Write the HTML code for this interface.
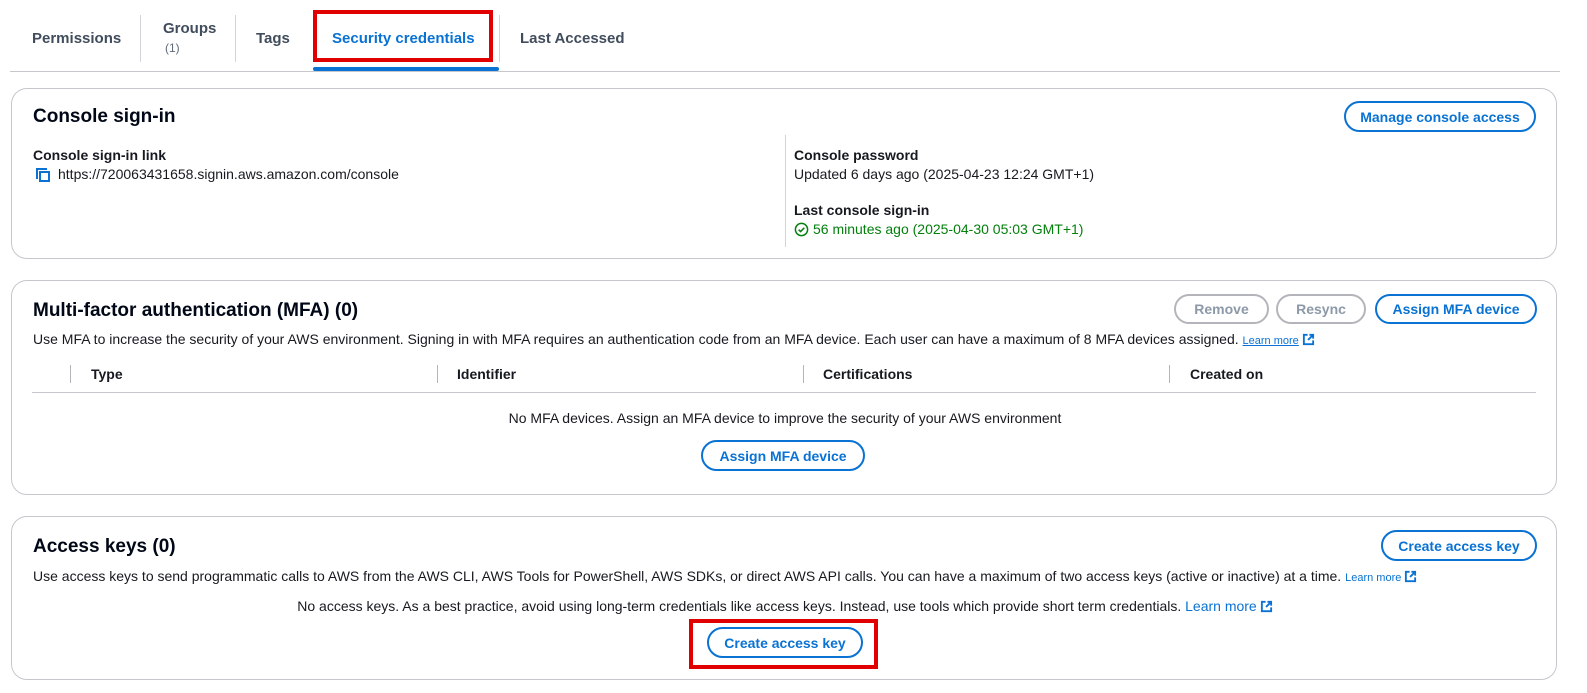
<!DOCTYPE html>
<html><head><style>
*{box-sizing:border-box;margin:0;padding:0}
html{overflow:hidden}
body{width:1587px;height:693px;background:#fff;font-family:"Liberation Sans",sans-serif;color:#16191f;position:relative;overflow:hidden;font-size:14px}
.a{position:absolute;white-space:nowrap}
.b{font-weight:bold}
.tab{position:absolute;font-weight:bold;font-size:15px;color:#414d5c}
.sep{position:absolute;width:1px;background:#d1d5db}
.card{position:absolute;left:11px;width:1546px;border:1px solid #c6c6cd;border-radius:16px}
.h{position:absolute;left:21px;font-size:19px;font-weight:bold;color:#000716}
.btn{position:absolute;border:2px solid #0972d3;border-radius:20px;color:#0972d3;font-weight:bold;font-size:14px;display:flex;align-items:center;justify-content:center;background:#fff}
.dis{border-color:#b4b4bb;color:#8d99a8}
.lnk{color:#0972d3}
.red{position:absolute;border:4px solid #e00000}
.th{position:absolute;font-weight:bold;top:366px}
.ext{display:inline-block;vertical-align:-2px;margin-left:3px}
</style></head><body>
<div class="tab" style="left:32px;top:30px">Permissions</div>
<div class="sep" style="left:140px;top:15px;height:47px"></div>
<div class="tab" style="left:163px;top:20px">Groups</div>
<div class="a" style="left:165px;top:41px;font-size:12px;color:#5f6b7a">(1)</div>
<div class="sep" style="left:235px;top:15px;height:47px"></div>
<div class="tab" style="left:256px;top:30px">Tags</div>
<div class="tab" style="left:332px;top:30px;color:#0972d3">Security credentials</div>
<div class="sep" style="left:499px;top:15px;height:47px"></div>
<div class="tab" style="left:520px;top:30px">Last Accessed</div>
<div class="red" style="left:313px;top:10px;width:180px;height:52px"></div>
<div class="a" style="left:10px;top:71px;width:1550px;height:1px;background:#c6c6cd"></div>
<div class="a" style="left:313px;top:67px;width:186px;height:4px;background:#0972d3;border-radius:2px"></div>

<div class="card" style="top:88px;height:171px">
 <div class="h" style="top:17px">Console sign-in</div>
 <div class="btn" style="left:1332px;top:12px;width:192px;height:31px">Manage console access</div>
 <div class="a b" style="left:21px;top:58px">Console sign-in link</div>
 <svg class="a" style="left:23px;top:78px" width="16" height="16" viewBox="0 0 16 16"><path d="M2 12V2h10" fill="none" stroke="#0972d3" stroke-width="2"/><rect x="5" y="5" width="9" height="9" fill="none" stroke="#0972d3" stroke-width="2"/></svg>
 <div class="a" style="left:46px;top:77px">https://720063431658.signin.aws.amazon.com/console</div>
 <div class="sep" style="left:773px;top:46px;height:112px"></div>
 <div class="a b" style="left:782px;top:58px">Console password</div>
 <div class="a" style="left:782px;top:77px">Updated 6 days ago (2025-04-23 12:24 GMT+1)</div>
 <div class="a b" style="left:782px;top:113px">Last console sign-in</div>
 <svg class="a" style="left:782px;top:133px" width="15" height="15" viewBox="0 0 16 16"><circle cx="8" cy="8" r="6.5" fill="none" stroke="#037f0c" stroke-width="1.6"/><path d="M5 8.2l2 2 4-4" fill="none" stroke="#037f0c" stroke-width="1.6"/></svg>
 <div class="a" style="left:801px;top:132px;color:#037f0c">56 minutes ago (2025-04-30 05:03 GMT+1)</div>
</div>

<div class="card" style="top:280px;height:215px">
 <div class="h" style="top:19px">Multi-factor authentication (MFA) (0)</div>
 <div class="btn dis" style="left:1162px;top:13px;width:95px;height:30px">Remove</div>
 <div class="btn dis" style="left:1264px;top:13px;width:90px;height:30px">Resync</div>
 <div class="btn" style="left:1363px;top:13px;width:162px;height:30px">Assign MFA device</div>
 <div class="a" style="left:21px;top:50px">Use MFA to increase the security of your AWS environment. Signing in with MFA requires an authentication code from an MFA device. Each user can have a maximum of 8 MFA devices assigned. <span class="lnk" style="font-size:11px;text-decoration:underline">Learn more</span><svg class="ext" width="13" height="13" viewBox="0 0 14 14"><path d="M6 2H2v10h10V8M8 2h4v4M12 2L6.5 7.5" fill="none" stroke="#0972d3" stroke-width="2"/></svg></div>
</div>
<div class="sep" style="left:70px;top:365px;height:18px;background:#b4b4bb"></div>
<div class="th" style="left:91px">Type</div>
<div class="sep" style="left:437px;top:365px;height:18px;background:#b4b4bb"></div>
<div class="th" style="left:457px">Identifier</div>
<div class="sep" style="left:803px;top:365px;height:18px;background:#b4b4bb"></div>
<div class="th" style="left:823px">Certifications</div>
<div class="sep" style="left:1169px;top:365px;height:18px;background:#b4b4bb"></div>
<div class="th" style="left:1190px">Created on</div>
<div class="a" style="left:32px;top:392px;width:1504px;height:1px;background:#c6c6cd"></div>
<div class="a" style="left:0;width:1570px;text-align:center;top:410px">No MFA devices. Assign an MFA device to improve the security of your AWS environment</div>
<div class="btn" style="left:701px;top:440px;width:164px;height:31px">Assign MFA device</div>

<div class="card" style="top:516px;height:164px">
 <div class="h" style="top:19px">Access keys (0)</div>
 <div class="btn" style="left:1369px;top:13px;width:156px;height:31px">Create access key</div>
 <div class="a" style="left:21px;top:51px">Use access keys to send programmatic calls to AWS from the AWS CLI, AWS Tools for PowerShell, AWS SDKs, or direct AWS API calls. You can have a maximum of two access keys (active or inactive) at a time. <span class="lnk" style="font-size:11px">Learn more</span><svg class="ext" width="13" height="13" viewBox="0 0 14 14"><path d="M6 2H2v10h10V8M8 2h4v4M12 2L6.5 7.5" fill="none" stroke="#0972d3" stroke-width="2"/></svg></div>
</div>
<div class="a" style="left:0;width:1570px;text-align:center;top:598px">No access keys. As a best practice, avoid using long-term credentials like access keys. Instead, use tools which provide short term credentials. <span class="lnk">Learn more</span><svg class="ext" width="13" height="13" viewBox="0 0 14 14"><path d="M6 2H2v10h10V8M8 2h4v4M12 2L6.5 7.5" fill="none" stroke="#0972d3" stroke-width="2"/></svg></div>
<div class="btn" style="left:707px;top:627px;width:156px;height:31px">Create access key</div>
<div class="red" style="left:689px;top:619px;width:189px;height:50px"></div>
</body></html>
